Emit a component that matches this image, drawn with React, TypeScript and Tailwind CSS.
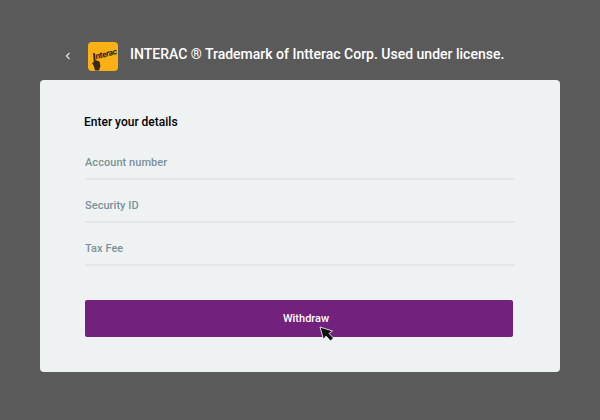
import React from 'react'

const fields = ['Account number', 'Security ID', 'Tax Fee']

function InteracLogo() {
  return (
    <div className="relative flex h-[29px] w-[30px] shrink-0 items-start justify-center overflow-hidden rounded-[4px] bg-[#fbb116]">
      <span className="mt-[7px] ml-[3px] -rotate-[14deg] text-[8.5px] leading-[10px] font-bold tracking-[-0.3px] text-[#2a1d0e] italic">
        Interac
      </span>
      <svg className="absolute top-[11px] left-[3px]" width="12" height="18" viewBox="0 0 12 18">
        <path
          d="M2 0 L3.4 0 L4.4 7 L8.5 8.5 L9.5 13 L8 17.5 L4 17.5 L2.8 13 L1 10 L2.8 9 Z"
          fill="#3a2a14"
        />
      </svg>
    </div>
  )
}

function Cursor() {
  return (
    <svg className="absolute top-[26px] left-[234px]" width="16" height="16" viewBox="0 0 16 16">
      <path
        d="M1 1 L4.5 13.5 L7 10 L11.5 15 L14.5 12 L10 7.5 L13.5 5 Z"
        fill="#111111"
        stroke="#ffffff"
        strokeWidth="0.8"
      />
    </svg>
  )
}

export default function App() {
  return (
    <div className="flex h-[420px] w-[600px] flex-col bg-[#5a5a5a] px-10 pt-[41px] font-['Roboto',sans-serif]">
      <div className="flex h-[30px] items-center pl-[25px]">
        <svg width="6" height="8" viewBox="0 0 6 8" className="mr-[17px]">
          <path d="M4.5 1 L1.5 4 L4.5 7" fill="none" stroke="#e4e4e4" strokeWidth="1.2" />
        </svg>
        <InteracLogo />
        <h1 className="ml-3 pb-[3px] text-[14px] font-medium whitespace-nowrap text-white">
          INTERAC ® Trademark of Intterac Corp. Used under license.
        </h1>
      </div>

      <div className="mt-[9px] h-[292px] rounded-[4px] bg-[#eff2f3] px-[45px] pt-[34px]">
        <h2 className="-ml-px text-[12px] leading-[16px] font-medium text-black">Enter your details</h2>
        <div className="mt-[7px] flex flex-col">
          {fields.map((label) => (
            <div
              key={label}
              className="flex h-[43px] items-start border-b-2 border-[#e3e7e8] pt-[19px] text-[11px] leading-[14px] font-medium tracking-[0.05px] text-[#7b9299]"
            >
              {label}
            </div>
          ))}
        </div>
        <div className="relative mt-[34px]">
          <button className="h-[37px] w-[428px] rounded-[2px] bg-[#72217c] pt-[1px] pl-[14px] text-[11px] font-medium text-white">
            Withdraw
          </button>
          <Cursor />
        </div>
      </div>
    </div>
  )
}
